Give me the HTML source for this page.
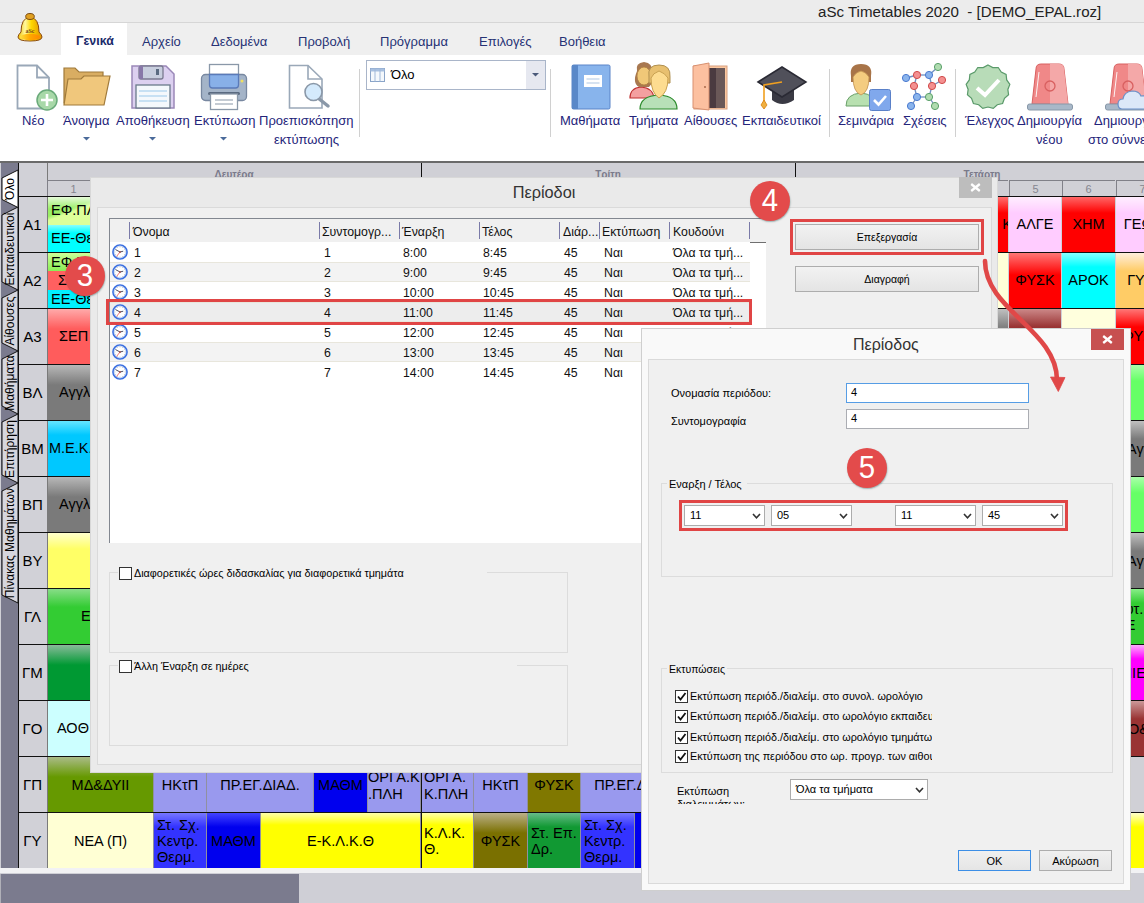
<!DOCTYPE html>
<html><head><meta charset="utf-8"><style>
html,body{margin:0;padding:0;}
body{width:1144px;height:903px;overflow:hidden;position:relative;font-family:"Liberation Sans", sans-serif;background:#fff;}
</style></head><body>
<div style="position:absolute;left:0px;top:161px;width:1144px;height:2px;background:#6a6a6a;"></div><div style="position:absolute;left:0px;top:163px;width:1144px;height:707px;background:#d0d0d6;"></div><div style="position:absolute;left:1px;top:163px;width:17px;height:707px;background:#7b7b8e;"></div><div style="position:absolute;left:18px;top:163px;width:29px;height:705px;background:#d1d1d7;border-left:1px solid #111;box-sizing:border-box;"></div><div style="position:absolute;left:47px;top:163px;width:1px;height:705px;background:#7a7a7a;"></div><div style="position:absolute;left:47px;top:163px;width:375px;height:17px;border-left:1px solid transparent;box-sizing:border-box;"></div><div style="position:absolute;left:47px;top:169px;white-space:nowrap;width:374px;text-align:center;font-size:10px;color:#7a7a8a;font-weight:bold;">Δευτέρα</div><div style="position:absolute;left:47px;top:180px;width:53px;height:16px;border-left:1px solid #808088;border-top:1px solid #808088;box-sizing:border-box;"></div><div style="position:absolute;left:47px;top:183px;white-space:nowrap;width:53px;text-align:center;font-size:11px;color:#85858f;">1</div><div style="position:absolute;left:100px;top:180px;width:53px;height:16px;border-left:1px solid #808088;border-top:1px solid #808088;box-sizing:border-box;"></div><div style="position:absolute;left:100px;top:183px;white-space:nowrap;width:53px;text-align:center;font-size:11px;color:#85858f;">2</div><div style="position:absolute;left:154px;top:180px;width:53px;height:16px;border-left:1px solid #808088;border-top:1px solid #808088;box-sizing:border-box;"></div><div style="position:absolute;left:154px;top:183px;white-space:nowrap;width:53px;text-align:center;font-size:11px;color:#85858f;">3</div><div style="position:absolute;left:207px;top:180px;width:53px;height:16px;border-left:1px solid #808088;border-top:1px solid #808088;box-sizing:border-box;"></div><div style="position:absolute;left:207px;top:183px;white-space:nowrap;width:53px;text-align:center;font-size:11px;color:#85858f;">4</div><div style="position:absolute;left:261px;top:180px;width:53px;height:16px;border-left:1px solid #808088;border-top:1px solid #808088;box-sizing:border-box;"></div><div style="position:absolute;left:261px;top:183px;white-space:nowrap;width:53px;text-align:center;font-size:11px;color:#85858f;">5</div><div style="position:absolute;left:314px;top:180px;width:53px;height:16px;border-left:1px solid #808088;border-top:1px solid #808088;box-sizing:border-box;"></div><div style="position:absolute;left:314px;top:183px;white-space:nowrap;width:53px;text-align:center;font-size:11px;color:#85858f;">6</div><div style="position:absolute;left:368px;top:180px;width:53px;height:16px;border-left:1px solid #808088;border-top:1px solid #808088;box-sizing:border-box;"></div><div style="position:absolute;left:368px;top:183px;white-space:nowrap;width:53px;text-align:center;font-size:11px;color:#85858f;">7</div><div style="position:absolute;left:421px;top:163px;width:375px;height:17px;border-left:1px solid #222;box-sizing:border-box;"></div><div style="position:absolute;left:421px;top:169px;white-space:nowrap;width:374px;text-align:center;font-size:10px;color:#7a7a8a;font-weight:bold;">Τρίτη</div><div style="position:absolute;left:421px;top:180px;width:53px;height:16px;border-left:1px solid #808088;border-top:1px solid #808088;box-sizing:border-box;"></div><div style="position:absolute;left:421px;top:183px;white-space:nowrap;width:53px;text-align:center;font-size:11px;color:#85858f;">1</div><div style="position:absolute;left:474px;top:180px;width:53px;height:16px;border-left:1px solid #808088;border-top:1px solid #808088;box-sizing:border-box;"></div><div style="position:absolute;left:474px;top:183px;white-space:nowrap;width:53px;text-align:center;font-size:11px;color:#85858f;">2</div><div style="position:absolute;left:528px;top:180px;width:53px;height:16px;border-left:1px solid #808088;border-top:1px solid #808088;box-sizing:border-box;"></div><div style="position:absolute;left:528px;top:183px;white-space:nowrap;width:53px;text-align:center;font-size:11px;color:#85858f;">3</div><div style="position:absolute;left:581px;top:180px;width:53px;height:16px;border-left:1px solid #808088;border-top:1px solid #808088;box-sizing:border-box;"></div><div style="position:absolute;left:581px;top:183px;white-space:nowrap;width:53px;text-align:center;font-size:11px;color:#85858f;">4</div><div style="position:absolute;left:635px;top:180px;width:53px;height:16px;border-left:1px solid #808088;border-top:1px solid #808088;box-sizing:border-box;"></div><div style="position:absolute;left:635px;top:183px;white-space:nowrap;width:53px;text-align:center;font-size:11px;color:#85858f;">5</div><div style="position:absolute;left:688px;top:180px;width:53px;height:16px;border-left:1px solid #808088;border-top:1px solid #808088;box-sizing:border-box;"></div><div style="position:absolute;left:688px;top:183px;white-space:nowrap;width:53px;text-align:center;font-size:11px;color:#85858f;">6</div><div style="position:absolute;left:742px;top:180px;width:53px;height:16px;border-left:1px solid #808088;border-top:1px solid #808088;box-sizing:border-box;"></div><div style="position:absolute;left:742px;top:183px;white-space:nowrap;width:53px;text-align:center;font-size:11px;color:#85858f;">7</div><div style="position:absolute;left:421px;top:163px;width:1px;height:33px;background:#222;"></div><div style="position:absolute;left:795px;top:163px;width:375px;height:17px;border-left:1px solid #222;box-sizing:border-box;"></div><div style="position:absolute;left:795px;top:169px;white-space:nowrap;width:374px;text-align:center;font-size:10px;color:#7a7a8a;font-weight:bold;">Τετάρτη</div><div style="position:absolute;left:795px;top:180px;width:53px;height:16px;border-left:1px solid #808088;border-top:1px solid #808088;box-sizing:border-box;"></div><div style="position:absolute;left:795px;top:183px;white-space:nowrap;width:53px;text-align:center;font-size:11px;color:#85858f;">1</div><div style="position:absolute;left:848px;top:180px;width:53px;height:16px;border-left:1px solid #808088;border-top:1px solid #808088;box-sizing:border-box;"></div><div style="position:absolute;left:848px;top:183px;white-space:nowrap;width:53px;text-align:center;font-size:11px;color:#85858f;">2</div><div style="position:absolute;left:902px;top:180px;width:53px;height:16px;border-left:1px solid #808088;border-top:1px solid #808088;box-sizing:border-box;"></div><div style="position:absolute;left:902px;top:183px;white-space:nowrap;width:53px;text-align:center;font-size:11px;color:#85858f;">3</div><div style="position:absolute;left:955px;top:180px;width:53px;height:16px;border-left:1px solid #808088;border-top:1px solid #808088;box-sizing:border-box;"></div><div style="position:absolute;left:955px;top:183px;white-space:nowrap;width:53px;text-align:center;font-size:11px;color:#85858f;">4</div><div style="position:absolute;left:1009px;top:180px;width:53px;height:16px;border-left:1px solid #808088;border-top:1px solid #808088;box-sizing:border-box;"></div><div style="position:absolute;left:1009px;top:183px;white-space:nowrap;width:53px;text-align:center;font-size:11px;color:#85858f;">5</div><div style="position:absolute;left:1062px;top:180px;width:53px;height:16px;border-left:1px solid #808088;border-top:1px solid #808088;box-sizing:border-box;"></div><div style="position:absolute;left:1062px;top:183px;white-space:nowrap;width:53px;text-align:center;font-size:11px;color:#85858f;">6</div><div style="position:absolute;left:1116px;top:180px;width:53px;height:16px;border-left:1px solid #808088;border-top:1px solid #808088;box-sizing:border-box;"></div><div style="position:absolute;left:1116px;top:183px;white-space:nowrap;width:53px;text-align:center;font-size:11px;color:#85858f;">7</div><div style="position:absolute;left:795px;top:163px;width:1px;height:33px;background:#222;"></div><div style="position:absolute;left:18px;top:196px;width:1126px;height:1px;background:#111;"></div><div style="position:absolute;left:18px;top:197px;white-space:nowrap;width:29px;height:55px;line-height:55px;text-align:center;font-size:15px;color:#000;">Α1</div><div style="position:absolute;left:18px;top:252px;width:1126px;height:1px;background:#111;"></div><div style="position:absolute;left:18px;top:253px;white-space:nowrap;width:29px;height:55px;line-height:55px;text-align:center;font-size:15px;color:#000;">Α2</div><div style="position:absolute;left:18px;top:308px;width:1126px;height:1px;background:#111;"></div><div style="position:absolute;left:18px;top:309px;white-space:nowrap;width:29px;height:55px;line-height:55px;text-align:center;font-size:15px;color:#000;">Α3</div><div style="position:absolute;left:18px;top:364px;width:1126px;height:1px;background:#111;"></div><div style="position:absolute;left:18px;top:365px;white-space:nowrap;width:29px;height:55px;line-height:55px;text-align:center;font-size:15px;color:#000;">ΒΛ</div><div style="position:absolute;left:18px;top:420px;width:1126px;height:1px;background:#111;"></div><div style="position:absolute;left:18px;top:421px;white-space:nowrap;width:29px;height:55px;line-height:55px;text-align:center;font-size:15px;color:#000;">ΒΜ</div><div style="position:absolute;left:18px;top:476px;width:1126px;height:1px;background:#111;"></div><div style="position:absolute;left:18px;top:477px;white-space:nowrap;width:29px;height:55px;line-height:55px;text-align:center;font-size:15px;color:#000;">ΒΠ</div><div style="position:absolute;left:18px;top:532px;width:1126px;height:1px;background:#111;"></div><div style="position:absolute;left:18px;top:533px;white-space:nowrap;width:29px;height:55px;line-height:55px;text-align:center;font-size:15px;color:#000;">ΒΥ</div><div style="position:absolute;left:18px;top:588px;width:1126px;height:1px;background:#111;"></div><div style="position:absolute;left:18px;top:589px;white-space:nowrap;width:29px;height:55px;line-height:55px;text-align:center;font-size:15px;color:#000;">ΓΛ</div><div style="position:absolute;left:18px;top:644px;width:1126px;height:1px;background:#111;"></div><div style="position:absolute;left:18px;top:645px;white-space:nowrap;width:29px;height:55px;line-height:55px;text-align:center;font-size:15px;color:#000;">ΓΜ</div><div style="position:absolute;left:18px;top:700px;width:1126px;height:1px;background:#111;"></div><div style="position:absolute;left:18px;top:701px;white-space:nowrap;width:29px;height:55px;line-height:55px;text-align:center;font-size:15px;color:#000;">ΓΟ</div><div style="position:absolute;left:18px;top:756px;width:1126px;height:1px;background:#111;"></div><div style="position:absolute;left:18px;top:757px;white-space:nowrap;width:29px;height:55px;line-height:55px;text-align:center;font-size:15px;color:#000;">ΓΠ</div><div style="position:absolute;left:18px;top:812px;width:1126px;height:1px;background:#111;"></div><div style="position:absolute;left:18px;top:813px;white-space:nowrap;width:29px;height:55px;line-height:55px;text-align:center;font-size:15px;color:#000;">ΓΥ</div><div style="position:absolute;left:18px;top:868px;width:1126px;height:1px;background:#111;"></div><div style="position:absolute;left:48px;top:197px;width:42px;height:28px;background:linear-gradient(to bottom,rgba(255,255,255,0.75) 0px,rgba(255,255,255,0) 12px),linear-gradient(160deg,#99ee66 0%,#99ee66 45%,#ddff99 55%,#ddff99 100%);overflow:hidden;"><div style="position:absolute;left:3px;top:5px;font-size:14.5px;white-space:nowrap;">ΕΦ.ΠΛΗ</div></div><div style="position:absolute;left:48px;top:225px;width:42px;height:27px;background:linear-gradient(to bottom,#88ffff 0,#00ffff 8px);overflow:hidden;"><div style="position:absolute;left:3px;top:5px;font-size:14.5px;white-space:nowrap;">ΕΕ-Θε</div></div><div style="position:absolute;left:48px;top:253px;width:42px;height:18px;background:linear-gradient(to bottom,#ccff99,#88ee55);overflow:hidden;"><div style="position:absolute;left:3px;top:1px;font-size:14.5px;white-space:nowrap;">ΕΦ.ΠΛ</div></div><div style="position:absolute;left:48px;top:271px;width:42px;height:19px;background:#ff6060;overflow:hidden;"><div style="position:absolute;left:10px;top:1px;font-size:14.5px;white-space:nowrap;">ΣΕΠ</div></div><div style="position:absolute;left:48px;top:290px;width:42px;height:18px;background:#00f0ff;overflow:hidden;"><div style="position:absolute;left:3px;top:1px;font-size:14.5px;white-space:nowrap;">ΕΕ-Θε</div></div><div style="position:absolute;left:48px;top:309px;width:42px;height:55px;background:linear-gradient(to bottom,#ffaaaa 0px,#ff5c5c 20px);overflow:hidden;"><div style="position:absolute;left:11px;top:0;line-height:55px;font-size:14.5px;white-space:nowrap;">ΣΕΠ</div></div><div style="position:absolute;left:48px;top:365px;width:42px;height:55px;background:linear-gradient(to bottom,#b8b8b8 0px,#7a7a7a 20px);overflow:hidden;"><div style="position:absolute;left:11px;top:0;line-height:55px;font-size:14.5px;white-space:nowrap;">Αγγλικά</div></div><div style="position:absolute;left:48px;top:421px;width:42px;height:55px;background:linear-gradient(to bottom,#66e6ff 0px,#00c8ff 14px);overflow:hidden;"><div style="position:absolute;left:1px;top:0;line-height:55px;font-size:14.5px;white-space:nowrap;">Μ.Ε.Κ.Α</div></div><div style="position:absolute;left:48px;top:477px;width:42px;height:55px;background:linear-gradient(to bottom,#b8b8b8 0px,#7a7a7a 20px);overflow:hidden;"><div style="position:absolute;left:11px;top:0;line-height:55px;font-size:14.5px;white-space:nowrap;">Αγγλικά</div></div><div style="position:absolute;left:48px;top:533px;width:42px;height:55px;background:linear-gradient(to bottom,#ffffcc 0px,#ffff66 16px);overflow:hidden;"></div><div style="position:absolute;left:48px;top:589px;width:42px;height:55px;background:linear-gradient(to bottom,#88dd88 0px,#33cc33 18px);overflow:hidden;"><div style="position:absolute;left:33px;top:0;line-height:55px;font-size:14.5px;white-space:nowrap;">Ε</div></div><div style="position:absolute;left:48px;top:645px;width:42px;height:55px;background:linear-gradient(to bottom,#88bb99 0px,#009933 20px);overflow:hidden;"></div><div style="position:absolute;left:48px;top:701px;width:42px;height:55px;background:#ccffff;overflow:hidden;"><div style="position:absolute;left:9px;top:0;line-height:55px;font-size:14.5px;white-space:nowrap;">ΑΟΘ</div></div><div style="position:absolute;left:955px;top:197px;width:53px;height:55px;background:linear-gradient(to bottom,#ff7070 0px,#ff0000 16px);overflow:hidden;"><div style="position:absolute;right:-4px;top:0;line-height:55px;font-size:14.5px;white-space:nowrap;">K</div></div><div style="position:absolute;left:1009px;top:197px;width:52px;height:55px;background:linear-gradient(to bottom,#ffeeff 0px,#ffccff 16px);overflow:hidden;"><div style="position:absolute;left:0;right:0;top:0;line-height:55px;text-align:center;font-size:14.5px;white-space:nowrap;">ΑΛΓΕ</div></div><div style="position:absolute;left:1062px;top:197px;width:53px;height:55px;background:linear-gradient(to bottom,#ff6666 0px,#ff0000 16px);overflow:hidden;"><div style="position:absolute;left:0;right:0;top:0;line-height:55px;text-align:center;font-size:14.5px;white-space:nowrap;">ΧΗΜ</div></div><div style="position:absolute;left:1116px;top:197px;width:52px;height:55px;background:linear-gradient(to bottom,#ffeeff 0px,#ffccff 16px);overflow:hidden;"><div style="position:absolute;left:0;right:0;top:0;line-height:55px;text-align:center;font-size:14.5px;white-space:nowrap;">ΓΕΩΓ</div></div><div style="position:absolute;left:955px;top:253px;width:53px;height:55px;background:#ffffd8;overflow:hidden;"></div><div style="position:absolute;left:1009px;top:253px;width:52px;height:55px;background:linear-gradient(to bottom,#ff7777 0px,#ff0000 22px);overflow:hidden;"><div style="position:absolute;left:0;right:0;top:0;line-height:55px;text-align:center;font-size:14.5px;white-space:nowrap;">ΦΥΣΚ</div></div><div style="position:absolute;left:1062px;top:253px;width:53px;height:55px;background:linear-gradient(to bottom,#88ffff 0px,#00ffff 14px);overflow:hidden;"><div style="position:absolute;left:0;right:0;top:0;line-height:55px;text-align:center;font-size:14.5px;white-space:nowrap;">ΑΡΟΚ</div></div><div style="position:absolute;left:1116px;top:253px;width:52px;height:55px;background:linear-gradient(to bottom,#ffeedd 0px,#ffcc66 18px);overflow:hidden;"><div style="position:absolute;left:0;right:0;top:0;line-height:55px;text-align:center;font-size:14.5px;white-space:nowrap;">ΓΥΜ</div></div><div style="position:absolute;left:955px;top:309px;width:53px;height:55px;background:linear-gradient(to bottom,#c0c0c0 0px,#808080 18px);overflow:hidden;"></div><div style="position:absolute;left:1009px;top:309px;width:52px;height:55px;background:linear-gradient(to bottom,#cc8888 0px,#993333 18px);overflow:hidden;"></div><div style="position:absolute;left:1062px;top:309px;width:53px;height:55px;background:#ffffdd;overflow:hidden;"></div><div style="position:absolute;left:1116px;top:309px;width:52px;height:55px;background:linear-gradient(to bottom,#ff7777 0px,#ff0000 18px);overflow:hidden;"><div style="position:absolute;left:0;right:0;top:0;line-height:55px;text-align:center;font-size:14.5px;white-space:nowrap;">ΦΥΣΚ</div></div><div style="position:absolute;left:1116px;top:365px;width:60px;height:55px;background:linear-gradient(to bottom,#aaffaa 0px,#66ff66 16px);overflow:hidden;"></div><div style="position:absolute;left:1116px;top:421px;width:60px;height:55px;background:linear-gradient(to bottom,#c0c0c0 0px,#7a7a7a 18px);overflow:hidden;"><div style="position:absolute;left:0;top:0;height:55px;display:flex;align-items:center;font-size:14.5px;line-height:16px;white-space:nowrap;"><span style="padding-left:11px">Αγγλ</span></div></div><div style="position:absolute;left:1116px;top:477px;width:60px;height:55px;background:linear-gradient(to bottom,#aaffaa 0px,#66ff66 16px);overflow:hidden;"></div><div style="position:absolute;left:1116px;top:533px;width:60px;height:55px;background:linear-gradient(to bottom,#c0c0c0 0px,#7a7a7a 18px);overflow:hidden;"><div style="position:absolute;left:0;top:0;height:55px;display:flex;align-items:center;font-size:14.5px;line-height:16px;white-space:nowrap;"><span style="padding-left:11px">Αγγλ</span></div></div><div style="position:absolute;left:1116px;top:589px;width:60px;height:55px;background:linear-gradient(to bottom,#88ee88 0px,#33cc33 14px);overflow:hidden;"><div style="position:absolute;left:0;top:0;height:55px;display:flex;align-items:center;font-size:14.5px;line-height:16px;white-space:nowrap;">Αυτ.<br>ΕΕ</div></div><div style="position:absolute;left:1116px;top:645px;width:60px;height:55px;background:linear-gradient(to bottom,#ffaaff 0px,#ff00ff 14px);overflow:hidden;"><div style="position:absolute;left:0;top:0;height:55px;display:flex;align-items:center;font-size:14.5px;line-height:16px;white-space:nowrap;">&nbsp;ΜΙΕ</div></div><div style="position:absolute;left:1116px;top:701px;width:60px;height:55px;background:linear-gradient(to bottom,#cc9999 0px,#993333 18px);overflow:hidden;"><div style="position:absolute;left:0;top:0;height:55px;display:flex;align-items:center;font-size:14.5px;line-height:16px;white-space:nowrap;">ΜΟ&</div></div><div style="position:absolute;left:1116px;top:757px;width:60px;height:55px;background:#d0d0d6;overflow:hidden;"></div><div style="position:absolute;left:1116px;top:813px;width:60px;height:55px;background:linear-gradient(to bottom,#ffffcc 0px,#ffff00 14px);overflow:hidden;"></div><div style="position:absolute;left:48px;top:757px;width:106px;height:55px;background:linear-gradient(to bottom,#aabb88 0px,#669900 20px);overflow:hidden;box-sizing:border-box;border-right:1px solid #9090a0;"><div style="position:absolute;left:0;right:0;top:50%;transform:translateY(-50%);text-align:center;font-size:14.5px;white-space:nowrap;">ΜΔ&amp;ΔΥΙΙ</div></div><div style="position:absolute;left:154px;top:757px;width:53px;height:55px;background:#9999ee;overflow:hidden;box-sizing:border-box;border-right:1px solid #9090a0;"><div style="position:absolute;left:0;right:0;top:50%;transform:translateY(-50%);text-align:center;font-size:14.5px;white-space:nowrap;">ΗΚτΠ</div></div><div style="position:absolute;left:207px;top:757px;width:107px;height:55px;background:#9999ee;overflow:hidden;box-sizing:border-box;border-right:1px solid #9090a0;"><div style="position:absolute;left:0;right:0;top:50%;transform:translateY(-50%);text-align:center;font-size:14.5px;white-space:nowrap;">ΠΡ.ΕΓ.ΔΙΑΔ.</div></div><div style="position:absolute;left:314px;top:757px;width:54px;height:55px;background:#0000ee;overflow:hidden;box-sizing:border-box;border-right:1px solid #9090a0;"><div style="position:absolute;left:0;right:0;top:50%;transform:translateY(-50%);text-align:center;font-size:14.5px;white-space:nowrap;">ΜΑΘΜ</div></div><div style="position:absolute;left:368px;top:757px;width:53px;height:55px;background:#9999ee;overflow:hidden;box-sizing:border-box;border-right:1px solid #9090a0;"></div><div style="position:absolute;left:368px;top:757px;width:53px;height:55px;overflow:hidden;"><div style="position:absolute;left:0;top:12px;line-height:17px;font-size:14.5px;white-space:nowrap;">ΟΡΙ Α.Κ<br>.ΠΛΗ</div></div><div style="position:absolute;left:421px;top:757px;width:53px;height:55px;background:#9999ee;overflow:hidden;box-sizing:border-box;border-right:1px solid #9090a0;"></div><div style="position:absolute;left:421px;top:757px;width:53px;height:55px;overflow:hidden;"><div style="position:absolute;left:3px;top:12px;line-height:17px;font-size:14.5px;white-space:nowrap;">ΟΡΙ Α.<br>Κ.ΠΛΗ</div></div><div style="position:absolute;left:474px;top:757px;width:54px;height:55px;background:#9999ee;overflow:hidden;box-sizing:border-box;border-right:1px solid #9090a0;"><div style="position:absolute;left:0;right:0;top:50%;transform:translateY(-50%);text-align:center;font-size:14.5px;white-space:nowrap;">ΗΚτΠ</div></div><div style="position:absolute;left:528px;top:757px;width:53px;height:55px;background:#807800;overflow:hidden;box-sizing:border-box;border-right:1px solid #9090a0;"><div style="position:absolute;left:0;right:0;top:50%;transform:translateY(-50%);text-align:center;font-size:14.5px;white-space:nowrap;">ΦΥΣΚ</div></div><div style="position:absolute;left:581px;top:757px;width:107px;height:55px;background:#9999ee;overflow:hidden;box-sizing:border-box;border-right:1px solid #9090a0;"><div style="position:absolute;left:0;right:0;top:50%;transform:translateY(-50%);text-align:center;font-size:14.5px;white-space:nowrap;">ΠΡ.ΕΓ.ΔΙΑΔ.</div></div><div style="position:absolute;left:48px;top:813px;width:106px;height:55px;background:#ffffd4;overflow:hidden;box-sizing:border-box;border-right:1px solid #9090a0;"><div style="position:absolute;left:0;right:0;top:50%;transform:translateY(-50%);text-align:center;font-size:14.5px;white-space:nowrap;">ΝΕΑ (Π)</div></div><div style="position:absolute;left:154px;top:813px;width:53px;height:55px;background:linear-gradient(to bottom,#7777ff 0px,#3333ff 14px);overflow:hidden;box-sizing:border-box;border-right:1px solid #9090a0;"><div style="position:absolute;left:0;right:0;top:50%;transform:translateY(-50%);text-align:center;font-size:14.5px;white-space:nowrap;"><div style="line-height:16px;text-align:left;padding-left:3px">Στ. Σχ.<br>Κεντρ.<br>Θερμ.</div></div></div><div style="position:absolute;left:207px;top:813px;width:54px;height:55px;background:linear-gradient(to bottom,#4444ff 0px,#0000ee 14px);overflow:hidden;box-sizing:border-box;border-right:1px solid #9090a0;"><div style="position:absolute;left:0;right:0;top:50%;transform:translateY(-50%);text-align:center;font-size:14.5px;white-space:nowrap;">ΜΑΘΜ</div></div><div style="position:absolute;left:261px;top:813px;width:160px;height:55px;background:linear-gradient(to bottom,#ffffaa 0px,#ffff00 12px);overflow:hidden;box-sizing:border-box;border-right:1px solid #9090a0;"><div style="position:absolute;left:0;right:0;top:50%;transform:translateY(-50%);text-align:center;font-size:14.5px;white-space:nowrap;">Ε-Κ.Λ.Κ.Θ</div></div><div style="position:absolute;left:421px;top:813px;width:53px;height:55px;background:linear-gradient(to bottom,#ffffaa 0px,#ffff00 12px);overflow:hidden;box-sizing:border-box;border-right:1px solid #9090a0;"><div style="position:absolute;left:0;right:0;top:50%;transform:translateY(-50%);text-align:center;font-size:14.5px;white-space:nowrap;"><div style="line-height:16px;text-align:left;padding-left:3px">Κ.Λ.Κ.<br>Θ.</div></div></div><div style="position:absolute;left:474px;top:813px;width:54px;height:55px;background:linear-gradient(to bottom,#bbb088 0px,#7a7000 20px);overflow:hidden;box-sizing:border-box;border-right:1px solid #9090a0;"><div style="position:absolute;left:0;right:0;top:50%;transform:translateY(-50%);text-align:center;font-size:14.5px;white-space:nowrap;">ΦΥΣΚ</div></div><div style="position:absolute;left:528px;top:813px;width:53px;height:55px;background:linear-gradient(to bottom,#66bb88 0px,#119933 14px);overflow:hidden;box-sizing:border-box;border-right:1px solid #9090a0;"><div style="position:absolute;left:0;right:0;top:50%;transform:translateY(-50%);text-align:center;font-size:14.5px;white-space:nowrap;"><div style="line-height:16px;text-align:left;padding-left:3px">Στ. Επ.<br>Δρ.</div></div></div><div style="position:absolute;left:581px;top:813px;width:54px;height:55px;background:linear-gradient(to bottom,#7777ff 0px,#3333ff 14px);overflow:hidden;box-sizing:border-box;border-right:1px solid #9090a0;"><div style="position:absolute;left:0;right:0;top:50%;transform:translateY(-50%);text-align:center;font-size:14.5px;white-space:nowrap;"><div style="line-height:16px;text-align:left;padding-left:3px">Στ. Σχ.<br>Κεντρ.<br>Θερμ.</div></div></div><div style="position:absolute;left:635px;top:813px;width:53px;height:55px;background:#0000ee;overflow:hidden;box-sizing:border-box;border-right:1px solid #9090a0;"></div><div style="position:absolute;left:421px;top:163px;width:1px;height:705px;background:#111;"></div><div style="position:absolute;left:795px;top:163px;width:1px;height:705px;background:#111;"></div><svg style="position:absolute;left:0;top:0" width="20" height="620" viewBox="0 0 20 620"><polygon points="18,207 2,215 2,282 18,290" fill="#d6d6de" stroke="#111" stroke-width="1"/><polygon points="18,290 2,298 2,343 18,351" fill="#d6d6de" stroke="#111" stroke-width="1"/><polygon points="18,351 2,359 2,406 18,414" fill="#d6d6de" stroke="#111" stroke-width="1"/><polygon points="18,414 2,422 2,475 18,483" fill="#d6d6de" stroke="#111" stroke-width="1"/><polygon points="18,483 2,491 2,595 18,603" fill="#d6d6de" stroke="#111" stroke-width="1"/><polygon points="18,170 2,178 2,199.5 18,207.5" fill="#fff" stroke="#111" stroke-width="1"/></svg><div style="position:absolute;left:-50px;top:180.5px;width:120px;height:16px;line-height:16px;text-align:center;transform:rotate(-90deg);font-size:12px;color:#000;white-space:nowrap;">Όλο</div><div style="position:absolute;left:-50px;top:240.5px;width:120px;height:16px;line-height:16px;text-align:center;transform:rotate(-90deg);font-size:12px;color:#000;white-space:nowrap;">Εκπαιδευτικοί</div><div style="position:absolute;left:-50px;top:312.5px;width:120px;height:16px;line-height:16px;text-align:center;transform:rotate(-90deg);font-size:12px;color:#000;white-space:nowrap;">Αίθουσες</div><div style="position:absolute;left:-50px;top:374.5px;width:120px;height:16px;line-height:16px;text-align:center;transform:rotate(-90deg);font-size:12px;color:#000;white-space:nowrap;">Μαθήματα</div><div style="position:absolute;left:-50px;top:440.5px;width:120px;height:16px;line-height:16px;text-align:center;transform:rotate(-90deg);font-size:12px;color:#000;white-space:nowrap;">Επιτήρηση</div><div style="position:absolute;left:-50px;top:535.0px;width:120px;height:16px;line-height:16px;text-align:center;transform:rotate(-90deg);font-size:12px;color:#000;white-space:nowrap;">Πίνακας Μαθημάτων</div><div style="position:absolute;left:0px;top:868px;width:1144px;height:6px;background:#f2f2f4;border-bottom:1px solid #909098;box-sizing:border-box;"></div><div style="position:absolute;left:0px;top:873px;width:1144px;height:30px;background:#cfcfd6;"></div><div style="position:absolute;left:0px;top:874px;width:1px;height:29px;background:#b0b0b8;"></div><div style="position:absolute;left:1px;top:874px;width:298px;height:29px;background:#7b7b8e;"></div><div style="position:absolute;left:0px;top:0px;width:1144px;height:23px;background:#ececec;border-bottom:1px solid #d6d6d6;box-sizing:border-box;"></div><div style="position:absolute;left:818px;top:3px;white-space:nowrap;font-size:15.1px;color:#222;">aSc Timetables 2020&nbsp; - [DEMO_EPAL.roz]</div><div style="position:absolute;left:0px;top:23px;width:1144px;height:32px;background:#efefef;"></div><div style="position:absolute;left:61px;top:23px;width:66px;height:32px;background:#fff;"></div><div style="position:absolute;left:76px;top:34px;white-space:nowrap;font-size:12.4px;color:#1a2a6a;font-weight:bold;">Γενικά</div><div style="position:absolute;left:142px;top:34px;white-space:nowrap;font-size:13px;color:#263275;">Αρχείο</div><div style="position:absolute;left:211px;top:34px;white-space:nowrap;font-size:13px;color:#263275;">Δεδομένα</div><div style="position:absolute;left:298px;top:34px;white-space:nowrap;font-size:13px;color:#263275;">Προβολή</div><div style="position:absolute;left:380px;top:34px;white-space:nowrap;font-size:13px;color:#263275;">Πρόγραμμα</div><div style="position:absolute;left:479px;top:34px;white-space:nowrap;font-size:13px;color:#263275;">Επιλογές</div><div style="position:absolute;left:559px;top:34px;white-space:nowrap;font-size:13px;color:#263275;">Βοήθεια</div><div style="position:absolute;left:0px;top:55px;width:1144px;height:106px;background:#fff;"></div><div style="position:absolute;left:22px;top:113px;white-space:nowrap;font-size:13px;color:#24247a;">Νέο</div><div style="position:absolute;left:63px;top:113px;white-space:nowrap;font-size:13px;color:#24247a;">Άνοιγμα</div><div style="position:absolute;left:116px;top:113px;white-space:nowrap;font-size:13px;color:#24247a;">Αποθήκευση</div><div style="position:absolute;left:194px;top:113px;white-space:nowrap;font-size:13px;color:#24247a;">Εκτύπωση</div><div style="position:absolute;left:259px;top:113px;white-space:nowrap;font-size:13px;color:#24247a;">Προεπισκόπηση</div><div style="position:absolute;left:274px;top:132px;white-space:nowrap;font-size:13px;color:#24247a;">εκτύπωσης</div><div style="position:absolute;left:560px;top:113px;white-space:nowrap;font-size:13px;color:#24247a;">Μαθήματα</div><div style="position:absolute;left:629px;top:113px;white-space:nowrap;font-size:13px;color:#24247a;">Τμήματα</div><div style="position:absolute;left:684px;top:113px;white-space:nowrap;font-size:13px;color:#24247a;">Αίθουσες</div><div style="position:absolute;left:742px;top:113px;white-space:nowrap;font-size:13px;color:#24247a;">Εκπαιδευτικοί</div><div style="position:absolute;left:838px;top:113px;white-space:nowrap;font-size:13px;color:#24247a;">Σεμινάρια</div><div style="position:absolute;left:903px;top:113px;white-space:nowrap;font-size:13px;color:#24247a;">Σχέσεις</div><div style="position:absolute;left:965px;top:113px;white-space:nowrap;font-size:13px;color:#24247a;">Έλεγχος</div><div style="position:absolute;left:1017px;top:113px;white-space:nowrap;font-size:13px;color:#24247a;">Δημιουργία</div><div style="position:absolute;left:1036px;top:132px;white-space:nowrap;font-size:13px;color:#24247a;">νέου</div><div style="position:absolute;left:1094px;top:113px;white-space:nowrap;font-size:13px;color:#24247a;">Δημιουργία</div><div style="position:absolute;left:1088px;top:132px;white-space:nowrap;font-size:13px;color:#24247a;">στο σύννεφο</div><svg style="position:absolute;left:83px;top:137px" width="7" height="4" viewBox="0 0 7 4"><path d="M0 0 L7 0 L3.5 3.5 Z" fill="#4a6a9a"/></svg><svg style="position:absolute;left:149px;top:137px" width="7" height="4" viewBox="0 0 7 4"><path d="M0 0 L7 0 L3.5 3.5 Z" fill="#4a6a9a"/></svg><svg style="position:absolute;left:220px;top:137px" width="7" height="4" viewBox="0 0 7 4"><path d="M0 0 L7 0 L3.5 3.5 Z" fill="#4a6a9a"/></svg><div style="position:absolute;left:359px;top:69px;width:1px;height:68px;background:#d0d0d0;"></div><div style="position:absolute;left:550px;top:69px;width:1px;height:68px;background:#d0d0d0;"></div><div style="position:absolute;left:829px;top:69px;width:1px;height:68px;background:#d0d0d0;"></div><div style="position:absolute;left:955px;top:69px;width:1px;height:68px;background:#d0d0d0;"></div><div style="position:absolute;left:366px;top:60px;width:180px;height:30px;background:#fff;border:1px solid #a9b5c9;box-sizing:border-box;"></div><div style="position:absolute;left:526px;top:61px;width:19px;height:28px;background:#e6e8f0;"></div><svg style="position:absolute;left:532px;top:73px" width="7" height="4" viewBox="0 0 7 4"><path d="M0 0 L7 0 L3.5 3.5 Z" fill="#4a5a7a"/></svg><svg style="position:absolute;left:370px;top:68px" width="15" height="14" viewBox="0 0 15 14"><rect x="0.5" y="0.5" width="14" height="13" fill="#f4f8fc" stroke="#8aa4c8"/><rect x="0.5" y="0.5" width="14" height="3" fill="#a8c0e0"/><path d="M5 0.5 V13.5 M10 0.5 V13.5" stroke="#a0b8d8"/></svg><div style="position:absolute;left:391px;top:67px;white-space:nowrap;font-size:13px;color:#000;">Όλο</div><svg style="position:absolute;left:15px;top:63px" width="44" height="50" viewBox="0 0 44 50"><path d="M2.5 2.5 H22 L34 14.5 V45.5 H2.5 Z" fill="#fff" stroke="#9aa8b8" stroke-width="1.8"/><path d="M22 2.5 V14.5 H34" fill="none" stroke="#9aa8b8" stroke-width="1.8"/><circle cx="32" cy="37" r="10" fill="#a8d8a8" stroke="#6aaa7a" stroke-width="1.5"/><path d="M32 31 V43 M26 37 H38" stroke="#fff" stroke-width="2.6"/></svg><svg style="position:absolute;left:62px;top:65px" width="50" height="44" viewBox="0 0 50 44"><path d="M2 3 H13 L17 7 H41 V38 H2 Z" fill="#d9ad62" stroke="#a07a3a" stroke-width="1.2"/><path d="M6 14 H19 L22 11 H48 L42 40 H2 Z" fill="#f0c77c" stroke="#a07a3a" stroke-width="1.2"/></svg><svg style="position:absolute;left:130px;top:64px" width="46" height="46" viewBox="0 0 46 46"><path d="M2 2 H36 L44 10 V44 H2 Z" fill="#dcd0f0" stroke="#9a88b8" stroke-width="1.5"/><rect x="9" y="2" width="24" height="13" rx="2" fill="#c8cede" stroke="#7a7a90" stroke-width="1.3"/><rect x="9" y="2" width="4" height="13" fill="#8878a8"/><rect x="26" y="5" width="3" height="6" fill="#5a6a80"/><rect x="6" y="21" width="34" height="23" fill="#f4f8fc" stroke="#6a7a8a" stroke-width="1.3"/><path d="M9 27 H37 M9 32 H37 M9 37 H37" stroke="#b8d8f0" stroke-width="1.3"/></svg><svg style="position:absolute;left:200px;top:63px" width="48" height="48" viewBox="0 0 48 48"><rect x="9.5" y="1.5" width="29" height="14" fill="#fff" stroke="#8a98a8" stroke-width="1.3"/><rect x="1.5" y="11.5" width="45" height="26" rx="4" fill="#a4b4c8" stroke="#7888a0" stroke-width="1.3"/><path d="M9.5 11.5 H38.5 V22 Q38.5 25 35.5 25 H12.5 Q9.5 25 9.5 22 Z" fill="#88b0e8" stroke="#5a7ab8" stroke-width="1.3"/><circle cx="42" cy="18" r="1.5" fill="#f0e060"/><rect x="8" y="29" width="32" height="3" rx="1.5" fill="#5a6a80"/><rect x="10.5" y="31" width="27" height="15.5" fill="#fff" stroke="#8a98a8" stroke-width="1.3"/><path d="M15 37 H33 M15 41 H33" stroke="#8a98a8" stroke-width="1.2"/></svg><svg style="position:absolute;left:287px;top:63px" width="46" height="48" viewBox="0 0 46 48"><path d="M2.5 2.5 H21 L35 16 V45 H2.5 Z" fill="#fff" stroke="#9aa8b8" stroke-width="1.6"/><path d="M21 2.5 V16 H35" fill="none" stroke="#9aa8b8" stroke-width="1.6"/><path d="M31 35 L41 43" stroke="#8a98a8" stroke-width="3.5" stroke-linecap="round"/><circle cx="26.5" cy="29" r="8.5" fill="#d4eafc" stroke="#8a98a8" stroke-width="1.6"/></svg><svg style="position:absolute;left:571px;top:64px" width="41" height="46" viewBox="0 0 41 46"><rect x="1" y="1" width="38" height="44" rx="1.5" fill="#88b4ec" stroke="#5a84c8" stroke-width="1"/><rect x="1" y="1" width="6" height="44" fill="#5a88c8"/><rect x="13" y="11" width="18" height="12" fill="#fff"/><path d="M15.5 15 H28.5 M15.5 19 H28.5" stroke="#b0c8e4" stroke-width="1.2"/></svg><svg style="position:absolute;left:627px;top:61px" width="54" height="52" viewBox="0 0 54 52"><path d="M3 37 Q3 27 14 26 Q26 27 27 37 Z" fill="#f4a0a0" stroke="#c03030" stroke-width="1.2"/><path d="M10 10 Q8 2 17 1 Q26 2 26 12 Q28 20 22 26 L12 26 Q5 22 10 10 Z" fill="#a87850"/><ellipse cx="17" cy="15" rx="7" ry="9" fill="#f0c878" stroke="#b08040" stroke-width="0.8"/><path d="M13 48 Q13 35 32 34 Q50 35 50 48 Z" fill="#b8e0b8" stroke="#2a8a2a" stroke-width="1.2"/><path d="M22 16 Q20 4 32 4 Q44 4 43 16 L43 22 L22 22 Z" fill="#e8c070" stroke="#b09050" stroke-width="1"/><path d="M24 17 Q24 32 32 37 Q41 32 41 17 Q38 12 32 10 Q26 12 24 17 Z" fill="#fddc90" stroke="#c8a050" stroke-width="1"/></svg><svg style="position:absolute;left:691px;top:62px" width="38" height="50" viewBox="0 0 38 50"><rect x="3" y="4" width="33" height="43" fill="#fcc8a0" stroke="#d8a080" stroke-width="1"/><rect x="18" y="6" width="16" height="40" fill="#4a3a40"/><rect x="25" y="6" width="9" height="40" fill="#6a5858"/><path d="M2 4 L18 1 V48 L2 46 Z" fill="#fcc0a0" stroke="#d89070" stroke-width="1"/><circle cx="14" cy="25" r="0.9" fill="#a06040"/></svg><svg style="position:absolute;left:756px;top:64px" width="52" height="46" viewBox="0 0 52 46"><path d="M16 16 V36 Q26 44 38 36 V16 Z" fill="#3a3a44"/><path d="M2 18 L26 3 L50 18 L26 33 Z" fill="#50505a" stroke="#2a2a34" stroke-width="1.5"/><path d="M26 18 L8 21 V38" stroke="#f0a020" stroke-width="1.6" fill="none"/><path d="M8 36 L5 41 L8 45 L11 41 Z" fill="#f0b040" stroke="#d88010" stroke-width="0.8"/></svg><svg style="position:absolute;left:843px;top:62px" width="50" height="50" viewBox="0 0 50 50"><path d="M3 44 Q3 32 18 31 Q32 32 33 44 Z" fill="#b8e0b0" stroke="#6aa06a" stroke-width="1"/><path d="M8 14 Q6 2 18 2 Q30 2 28 14 L28 20 L8 20 Z" fill="#a87448"/><path d="M10 15 Q10 30 18 33 Q26 30 26 15 Q23 10 18 9 Q13 10 10 15 Z" fill="#f4cc80" stroke="#c09050" stroke-width="0.8"/><rect x="26.5" y="27.5" width="21" height="21" rx="2" fill="#80a8ec" stroke="#5a80c8" stroke-width="1"/><path d="M31 38 L35.5 42.5 L43 34" stroke="#fff" stroke-width="2.6" fill="none"/></svg><svg style="position:absolute;left:900px;top:60px" width="50" height="52" viewBox="0 0 50 52"><line x1="6" y1="18" x2="17" y2="15" stroke="#7090c0" stroke-width="1.3"/><line x1="17" y1="15" x2="29" y2="15" stroke="#7090c0" stroke-width="1.3"/><line x1="29" y1="15" x2="38" y2="7" stroke="#7090c0" stroke-width="1.3"/><line x1="17" y1="15" x2="14" y2="26" stroke="#7090c0" stroke-width="1.3"/><line x1="29" y1="15" x2="32" y2="26" stroke="#7090c0" stroke-width="1.3"/><line x1="32" y1="26" x2="42" y2="20" stroke="#7090c0" stroke-width="1.3"/><line x1="14" y1="26" x2="17" y2="37" stroke="#7090c0" stroke-width="1.3"/><line x1="17" y1="37" x2="29" y2="37" stroke="#7090c0" stroke-width="1.3"/><line x1="32" y1="26" x2="29" y2="37" stroke="#7090c0" stroke-width="1.3"/><line x1="17" y1="37" x2="11" y2="46" stroke="#7090c0" stroke-width="1.3"/><line x1="29" y1="37" x2="35" y2="46" stroke="#7090c0" stroke-width="1.3"/><circle cx="6" cy="18" r="3.6" fill="#8ab4ec" stroke="#4a7ad0" stroke-width="1"/><circle cx="17" cy="15" r="3.6" fill="#f49090" stroke="#d04a4a" stroke-width="1"/><circle cx="29" cy="15" r="3.6" fill="#8ab4ec" stroke="#4a7ad0" stroke-width="1"/><circle cx="38" cy="7" r="3.6" fill="#b0dcb0" stroke="#5aa06a" stroke-width="1"/><circle cx="14" cy="26" r="3.6" fill="#f49090" stroke="#d04a4a" stroke-width="1"/><circle cx="32" cy="26" r="3.6" fill="#f49090" stroke="#d04a4a" stroke-width="1"/><circle cx="42" cy="20" r="3.6" fill="#f49090" stroke="#d04a4a" stroke-width="1"/><circle cx="17" cy="37" r="3.6" fill="#8ab4ec" stroke="#4a7ad0" stroke-width="1"/><circle cx="29" cy="37" r="3.6" fill="#b0dcb0" stroke="#5aa06a" stroke-width="1"/><circle cx="11" cy="46" r="3.6" fill="#8ab4ec" stroke="#4a7ad0" stroke-width="1"/><circle cx="35" cy="46" r="3.6" fill="#b0dcb0" stroke="#5aa06a" stroke-width="1"/></svg><svg style="position:absolute;left:965px;top:64px" width="46" height="46" viewBox="0 0 46 46"><polygon points="23.00,1.00 27.79,3.58 33.22,3.52 36.26,8.03 41.11,10.50 41.70,15.91 44.84,20.35 42.85,25.41 43.57,30.80 39.46,34.36 37.59,39.47 32.29,40.71 28.26,44.36 23.00,43.00 17.74,44.36 13.71,40.71 8.41,39.47 6.54,34.36 2.43,30.80 3.15,25.41 1.16,20.35 4.30,15.91 4.89,10.50 9.74,8.03 12.78,3.52 18.21,3.58" fill="#b8dcb8" stroke="#5a9a6a" stroke-width="1.2"/><path d="M12 24 L20 31 L34 16" stroke="#fff" stroke-width="4" fill="none"/></svg><svg style="position:absolute;left:1026px;top:63px" width="50" height="49" viewBox="0 0 50 49"><path d="M10 6 Q10 1 15 1 H33 Q38 1 38 6 L42 41 H6 Z" fill="#f08888" stroke="#d86060" stroke-width="1"/><path d="M24 1 H33 Q38 1 38 6 L42 41 H24 Z" fill="#f4a8a8"/><path d="M13 9 L10 34" stroke="#fff" stroke-width="1" opacity="0.9"/><circle cx="24" cy="23" r="5" fill="none" stroke="#d86060" stroke-width="1.3"/><rect x="1.5" y="41" width="45" height="6" rx="2" fill="#a8b8c8" stroke="#8898a8" stroke-width="1"/></svg><svg style="position:absolute;left:1104px;top:63px" width="50" height="49" viewBox="0 0 50 49"><path d="M10 6 Q10 1 15 1 H33 Q38 1 38 6 L42 41 H6 Z" fill="#f08888" stroke="#d86060" stroke-width="1"/><path d="M24 1 H33 Q38 1 38 6 L42 41 H24 Z" fill="#f4a8a8"/><path d="M13 9 L10 34" stroke="#fff" stroke-width="1" opacity="0.9"/><circle cx="24" cy="23" r="5" fill="none" stroke="#d86060" stroke-width="1.3"/><rect x="1.5" y="41" width="45" height="6" rx="2" fill="#a8b8c8" stroke="#8898a8" stroke-width="1"/><path d="M18 46 Q14 46 14 41 Q14 36 19 36 Q20 29 28 28 Q35 28 37 33 Q44 32 46 38 L48 46 Z" fill="#dce8f8" stroke="#6a90c8" stroke-width="1.2"/></svg><svg style="position:absolute;left:14px;top:10px" width="32" height="34" viewBox="0 0 32 34"><defs><linearGradient id="bg1" x1="0" x2="1" y1="0" y2="0"><stop offset="0" stop-color="#f0c000"/><stop offset="0.3" stop-color="#fff8a0"/><stop offset="0.55" stop-color="#ffd800"/><stop offset="1" stop-color="#e09000"/></linearGradient><linearGradient id="bg2" x1="0" x2="1"><stop offset="0" stop-color="#ffe040"/><stop offset="0.5" stop-color="#ffa800"/><stop offset="1" stop-color="#ff8800"/></linearGradient></defs><path d="M7 22 Q7 8 16 7 Q25 8 25 22 Q28 25 28 27 Q28 31 16 31 Q4 31 4 27 Q4 25 7 22 Z" fill="url(#bg1)" stroke="#8a4a10" stroke-width="1"/><ellipse cx="16" cy="27" rx="10" ry="3.2" fill="url(#bg2)"/><ellipse cx="16" cy="6.5" rx="4.3" ry="3" fill="#e0a020" stroke="#7a4a10" stroke-width="1"/><text x="16" y="23" font-size="6" font-family="Liberation Serif" text-anchor="middle" fill="#7a4a20" font-weight="bold">aSc</text></svg><div style="position:absolute;left:90px;top:177px;width:908px;height:596px;background:#eaeaea;border:1px solid #d8d8d8;box-sizing:border-box;"></div><div style="position:absolute;left:90px;top:183px;white-space:nowrap;width:908px;text-align:center;font-size:16.3px;color:#333;">Περίοδοι</div><div style="position:absolute;left:959px;top:177px;width:33px;height:21px;background:#bdbdbd;"><svg style="position:absolute;left:11px;top:6px" width="11" height="9" viewBox="0 0 11 9"><path d="M1.2 1 L9.8 8 M9.8 1 L1.2 8" stroke="#fff" stroke-width="2.3"/></svg></div><div style="position:absolute;left:97px;top:207px;width:895px;height:558px;background:#f0f0f0;border:1px solid #dadada;box-sizing:border-box;"></div><div style="position:absolute;left:109px;top:218px;width:657px;height:325px;background:#fff;border:1px solid #828790;border-right:none;border-bottom:none;box-sizing:border-box;"></div><div style="position:absolute;left:110px;top:219px;width:656px;height:24px;background:#f0f0f0;border-bottom:1px solid #6f6f6f;box-sizing:border-box;"></div><div style="position:absolute;left:129px;top:222px;width:1px;height:17px;background:#7a7aa8;"></div><div style="position:absolute;left:319px;top:222px;width:1px;height:17px;background:#7a7aa8;"></div><div style="position:absolute;left:399px;top:222px;width:1px;height:17px;background:#7a7aa8;"></div><div style="position:absolute;left:479px;top:222px;width:1px;height:17px;background:#7a7aa8;"></div><div style="position:absolute;left:559px;top:222px;width:1px;height:17px;background:#7a7aa8;"></div><div style="position:absolute;left:599px;top:222px;width:1px;height:17px;background:#7a7aa8;"></div><div style="position:absolute;left:669px;top:222px;width:1px;height:17px;background:#7a7aa8;"></div><div style="position:absolute;left:749px;top:222px;width:1px;height:17px;background:#7a7aa8;"></div><div style="position:absolute;left:133px;top:225px;white-space:nowrap;font-size:12.3px;color:#111;">Όνομα</div><div style="position:absolute;left:322px;top:225px;white-space:nowrap;font-size:12.3px;color:#111;">Συντομογρ...</div><div style="position:absolute;left:402px;top:225px;white-space:nowrap;font-size:12.3px;color:#111;">Έναρξη</div><div style="position:absolute;left:482px;top:225px;white-space:nowrap;font-size:12.3px;color:#111;">Τέλος</div><div style="position:absolute;left:563px;top:225px;white-space:nowrap;font-size:12.3px;color:#111;">Διάρ...</div><div style="position:absolute;left:602px;top:225px;white-space:nowrap;font-size:12.3px;color:#111;">Εκτύπωση</div><div style="position:absolute;left:673px;top:225px;white-space:nowrap;font-size:12.3px;color:#111;">Κουδούνι</div><div style="position:absolute;left:110px;top:242px;width:640px;height:20px;background:#ffffff;box-sizing:border-box;"></div><svg style="position:absolute;left:111px;top:243px" width="18" height="18" viewBox="0 0 18 18">
<circle cx="9" cy="9" r="7" fill="#fff" stroke="#3a6ee0" stroke-width="1.7"/>
<circle cx="9" cy="9" r="6" fill="none" stroke="#a8c4f4" stroke-width="0.6"/>
<g stroke="#b0b0b0" stroke-width="0.7"><line x1="13.60" y1="9.00" x2="14.60" y2="9.00"/><line x1="12.98" y1="11.30" x2="13.85" y2="11.80"/><line x1="11.30" y1="12.98" x2="11.80" y2="13.85"/><line x1="9.00" y1="13.60" x2="9.00" y2="14.60"/><line x1="6.70" y1="12.98" x2="6.20" y2="13.85"/><line x1="5.02" y1="11.30" x2="4.15" y2="11.80"/><line x1="4.40" y1="9.00" x2="3.40" y2="9.00"/><line x1="5.02" y1="6.70" x2="4.15" y2="6.20"/><line x1="6.70" y1="5.02" x2="6.20" y2="4.15"/><line x1="9.00" y1="4.40" x2="9.00" y2="3.40"/><line x1="11.30" y1="5.02" x2="11.80" y2="4.15"/><line x1="12.98" y1="6.70" x2="13.85" y2="6.20"/></g>
<line x1="9" y1="9" x2="4.6" y2="6.6" stroke="#505060" stroke-width="1"/>
<line x1="9" y1="9" x2="12.2" y2="8.2" stroke="#505060" stroke-width="1"/>
<line x1="9" y1="9" x2="5.6" y2="13.4" stroke="#ee5050" stroke-width="0.8"/>
<circle cx="9" cy="9" r="0.9" fill="#a05050"/>
</svg><div style="position:absolute;left:134px;top:246px;white-space:nowrap;font-size:12.3px;color:#111;">1</div><div style="position:absolute;left:324px;top:246px;white-space:nowrap;font-size:12.3px;color:#111;">1</div><div style="position:absolute;left:403px;top:246px;white-space:nowrap;font-size:12.3px;color:#111;">8:00</div><div style="position:absolute;left:483px;top:246px;white-space:nowrap;font-size:12.3px;color:#111;">8:45</div><div style="position:absolute;left:564px;top:246px;white-space:nowrap;font-size:12.3px;color:#111;">45</div><div style="position:absolute;left:604px;top:246px;white-space:nowrap;font-size:12.3px;color:#111;">Ναι</div><div style="position:absolute;left:673px;top:246px;white-space:nowrap;font-size:12.3px;color:#111;">Όλα τα τμή...</div><div style="position:absolute;left:110px;top:262px;width:640px;height:20px;background:#f3f3f3;border-top:1px solid #e8e6dc;border-bottom:1px solid #e8e6dc;box-sizing:border-box;"></div><svg style="position:absolute;left:111px;top:263px" width="18" height="18" viewBox="0 0 18 18">
<circle cx="9" cy="9" r="7" fill="#fff" stroke="#3a6ee0" stroke-width="1.7"/>
<circle cx="9" cy="9" r="6" fill="none" stroke="#a8c4f4" stroke-width="0.6"/>
<g stroke="#b0b0b0" stroke-width="0.7"><line x1="13.60" y1="9.00" x2="14.60" y2="9.00"/><line x1="12.98" y1="11.30" x2="13.85" y2="11.80"/><line x1="11.30" y1="12.98" x2="11.80" y2="13.85"/><line x1="9.00" y1="13.60" x2="9.00" y2="14.60"/><line x1="6.70" y1="12.98" x2="6.20" y2="13.85"/><line x1="5.02" y1="11.30" x2="4.15" y2="11.80"/><line x1="4.40" y1="9.00" x2="3.40" y2="9.00"/><line x1="5.02" y1="6.70" x2="4.15" y2="6.20"/><line x1="6.70" y1="5.02" x2="6.20" y2="4.15"/><line x1="9.00" y1="4.40" x2="9.00" y2="3.40"/><line x1="11.30" y1="5.02" x2="11.80" y2="4.15"/><line x1="12.98" y1="6.70" x2="13.85" y2="6.20"/></g>
<line x1="9" y1="9" x2="4.6" y2="6.6" stroke="#505060" stroke-width="1"/>
<line x1="9" y1="9" x2="12.2" y2="8.2" stroke="#505060" stroke-width="1"/>
<line x1="9" y1="9" x2="5.6" y2="13.4" stroke="#ee5050" stroke-width="0.8"/>
<circle cx="9" cy="9" r="0.9" fill="#a05050"/>
</svg><div style="position:absolute;left:134px;top:266px;white-space:nowrap;font-size:12.3px;color:#111;">2</div><div style="position:absolute;left:324px;top:266px;white-space:nowrap;font-size:12.3px;color:#111;">2</div><div style="position:absolute;left:403px;top:266px;white-space:nowrap;font-size:12.3px;color:#111;">9:00</div><div style="position:absolute;left:483px;top:266px;white-space:nowrap;font-size:12.3px;color:#111;">9:45</div><div style="position:absolute;left:564px;top:266px;white-space:nowrap;font-size:12.3px;color:#111;">45</div><div style="position:absolute;left:604px;top:266px;white-space:nowrap;font-size:12.3px;color:#111;">Ναι</div><div style="position:absolute;left:673px;top:266px;white-space:nowrap;font-size:12.3px;color:#111;">Όλα τα τμή...</div><div style="position:absolute;left:110px;top:282px;width:640px;height:20px;background:#ffffff;box-sizing:border-box;"></div><svg style="position:absolute;left:111px;top:283px" width="18" height="18" viewBox="0 0 18 18">
<circle cx="9" cy="9" r="7" fill="#fff" stroke="#3a6ee0" stroke-width="1.7"/>
<circle cx="9" cy="9" r="6" fill="none" stroke="#a8c4f4" stroke-width="0.6"/>
<g stroke="#b0b0b0" stroke-width="0.7"><line x1="13.60" y1="9.00" x2="14.60" y2="9.00"/><line x1="12.98" y1="11.30" x2="13.85" y2="11.80"/><line x1="11.30" y1="12.98" x2="11.80" y2="13.85"/><line x1="9.00" y1="13.60" x2="9.00" y2="14.60"/><line x1="6.70" y1="12.98" x2="6.20" y2="13.85"/><line x1="5.02" y1="11.30" x2="4.15" y2="11.80"/><line x1="4.40" y1="9.00" x2="3.40" y2="9.00"/><line x1="5.02" y1="6.70" x2="4.15" y2="6.20"/><line x1="6.70" y1="5.02" x2="6.20" y2="4.15"/><line x1="9.00" y1="4.40" x2="9.00" y2="3.40"/><line x1="11.30" y1="5.02" x2="11.80" y2="4.15"/><line x1="12.98" y1="6.70" x2="13.85" y2="6.20"/></g>
<line x1="9" y1="9" x2="4.6" y2="6.6" stroke="#505060" stroke-width="1"/>
<line x1="9" y1="9" x2="12.2" y2="8.2" stroke="#505060" stroke-width="1"/>
<line x1="9" y1="9" x2="5.6" y2="13.4" stroke="#ee5050" stroke-width="0.8"/>
<circle cx="9" cy="9" r="0.9" fill="#a05050"/>
</svg><div style="position:absolute;left:134px;top:286px;white-space:nowrap;font-size:12.3px;color:#111;">3</div><div style="position:absolute;left:324px;top:286px;white-space:nowrap;font-size:12.3px;color:#111;">3</div><div style="position:absolute;left:403px;top:286px;white-space:nowrap;font-size:12.3px;color:#111;">10:00</div><div style="position:absolute;left:483px;top:286px;white-space:nowrap;font-size:12.3px;color:#111;">10:45</div><div style="position:absolute;left:564px;top:286px;white-space:nowrap;font-size:12.3px;color:#111;">45</div><div style="position:absolute;left:604px;top:286px;white-space:nowrap;font-size:12.3px;color:#111;">Ναι</div><div style="position:absolute;left:673px;top:286px;white-space:nowrap;font-size:12.3px;color:#111;">Όλα τα τμή...</div><div style="position:absolute;left:110px;top:302px;width:640px;height:20px;background:#ededed;border-top:1px solid #e8e6dc;border-bottom:1px solid #e8e6dc;box-sizing:border-box;"></div><svg style="position:absolute;left:111px;top:303px" width="18" height="18" viewBox="0 0 18 18">
<circle cx="9" cy="9" r="7" fill="#fff" stroke="#3a6ee0" stroke-width="1.7"/>
<circle cx="9" cy="9" r="6" fill="none" stroke="#a8c4f4" stroke-width="0.6"/>
<g stroke="#b0b0b0" stroke-width="0.7"><line x1="13.60" y1="9.00" x2="14.60" y2="9.00"/><line x1="12.98" y1="11.30" x2="13.85" y2="11.80"/><line x1="11.30" y1="12.98" x2="11.80" y2="13.85"/><line x1="9.00" y1="13.60" x2="9.00" y2="14.60"/><line x1="6.70" y1="12.98" x2="6.20" y2="13.85"/><line x1="5.02" y1="11.30" x2="4.15" y2="11.80"/><line x1="4.40" y1="9.00" x2="3.40" y2="9.00"/><line x1="5.02" y1="6.70" x2="4.15" y2="6.20"/><line x1="6.70" y1="5.02" x2="6.20" y2="4.15"/><line x1="9.00" y1="4.40" x2="9.00" y2="3.40"/><line x1="11.30" y1="5.02" x2="11.80" y2="4.15"/><line x1="12.98" y1="6.70" x2="13.85" y2="6.20"/></g>
<line x1="9" y1="9" x2="4.6" y2="6.6" stroke="#505060" stroke-width="1"/>
<line x1="9" y1="9" x2="12.2" y2="8.2" stroke="#505060" stroke-width="1"/>
<line x1="9" y1="9" x2="5.6" y2="13.4" stroke="#ee5050" stroke-width="0.8"/>
<circle cx="9" cy="9" r="0.9" fill="#a05050"/>
</svg><div style="position:absolute;left:134px;top:306px;white-space:nowrap;font-size:12.3px;color:#111;">4</div><div style="position:absolute;left:324px;top:306px;white-space:nowrap;font-size:12.3px;color:#111;">4</div><div style="position:absolute;left:403px;top:306px;white-space:nowrap;font-size:12.3px;color:#111;">11:00</div><div style="position:absolute;left:483px;top:306px;white-space:nowrap;font-size:12.3px;color:#111;">11:45</div><div style="position:absolute;left:564px;top:306px;white-space:nowrap;font-size:12.3px;color:#111;">45</div><div style="position:absolute;left:604px;top:306px;white-space:nowrap;font-size:12.3px;color:#111;">Ναι</div><div style="position:absolute;left:673px;top:306px;white-space:nowrap;font-size:12.3px;color:#111;">Όλα τα τμή...</div><div style="position:absolute;left:110px;top:322px;width:640px;height:20px;background:#ffffff;box-sizing:border-box;"></div><svg style="position:absolute;left:111px;top:323px" width="18" height="18" viewBox="0 0 18 18">
<circle cx="9" cy="9" r="7" fill="#fff" stroke="#3a6ee0" stroke-width="1.7"/>
<circle cx="9" cy="9" r="6" fill="none" stroke="#a8c4f4" stroke-width="0.6"/>
<g stroke="#b0b0b0" stroke-width="0.7"><line x1="13.60" y1="9.00" x2="14.60" y2="9.00"/><line x1="12.98" y1="11.30" x2="13.85" y2="11.80"/><line x1="11.30" y1="12.98" x2="11.80" y2="13.85"/><line x1="9.00" y1="13.60" x2="9.00" y2="14.60"/><line x1="6.70" y1="12.98" x2="6.20" y2="13.85"/><line x1="5.02" y1="11.30" x2="4.15" y2="11.80"/><line x1="4.40" y1="9.00" x2="3.40" y2="9.00"/><line x1="5.02" y1="6.70" x2="4.15" y2="6.20"/><line x1="6.70" y1="5.02" x2="6.20" y2="4.15"/><line x1="9.00" y1="4.40" x2="9.00" y2="3.40"/><line x1="11.30" y1="5.02" x2="11.80" y2="4.15"/><line x1="12.98" y1="6.70" x2="13.85" y2="6.20"/></g>
<line x1="9" y1="9" x2="4.6" y2="6.6" stroke="#505060" stroke-width="1"/>
<line x1="9" y1="9" x2="12.2" y2="8.2" stroke="#505060" stroke-width="1"/>
<line x1="9" y1="9" x2="5.6" y2="13.4" stroke="#ee5050" stroke-width="0.8"/>
<circle cx="9" cy="9" r="0.9" fill="#a05050"/>
</svg><div style="position:absolute;left:134px;top:326px;white-space:nowrap;font-size:12.3px;color:#111;">5</div><div style="position:absolute;left:324px;top:326px;white-space:nowrap;font-size:12.3px;color:#111;">5</div><div style="position:absolute;left:403px;top:326px;white-space:nowrap;font-size:12.3px;color:#111;">12:00</div><div style="position:absolute;left:483px;top:326px;white-space:nowrap;font-size:12.3px;color:#111;">12:45</div><div style="position:absolute;left:564px;top:326px;white-space:nowrap;font-size:12.3px;color:#111;">45</div><div style="position:absolute;left:604px;top:326px;white-space:nowrap;font-size:12.3px;color:#111;">Ναι</div><div style="position:absolute;left:673px;top:326px;white-space:nowrap;font-size:12.3px;color:#111;">Όλα τα τμή...</div><div style="position:absolute;left:110px;top:342px;width:640px;height:20px;background:#f3f3f3;border-top:1px solid #e8e6dc;border-bottom:1px solid #e8e6dc;box-sizing:border-box;"></div><svg style="position:absolute;left:111px;top:343px" width="18" height="18" viewBox="0 0 18 18">
<circle cx="9" cy="9" r="7" fill="#fff" stroke="#3a6ee0" stroke-width="1.7"/>
<circle cx="9" cy="9" r="6" fill="none" stroke="#a8c4f4" stroke-width="0.6"/>
<g stroke="#b0b0b0" stroke-width="0.7"><line x1="13.60" y1="9.00" x2="14.60" y2="9.00"/><line x1="12.98" y1="11.30" x2="13.85" y2="11.80"/><line x1="11.30" y1="12.98" x2="11.80" y2="13.85"/><line x1="9.00" y1="13.60" x2="9.00" y2="14.60"/><line x1="6.70" y1="12.98" x2="6.20" y2="13.85"/><line x1="5.02" y1="11.30" x2="4.15" y2="11.80"/><line x1="4.40" y1="9.00" x2="3.40" y2="9.00"/><line x1="5.02" y1="6.70" x2="4.15" y2="6.20"/><line x1="6.70" y1="5.02" x2="6.20" y2="4.15"/><line x1="9.00" y1="4.40" x2="9.00" y2="3.40"/><line x1="11.30" y1="5.02" x2="11.80" y2="4.15"/><line x1="12.98" y1="6.70" x2="13.85" y2="6.20"/></g>
<line x1="9" y1="9" x2="4.6" y2="6.6" stroke="#505060" stroke-width="1"/>
<line x1="9" y1="9" x2="12.2" y2="8.2" stroke="#505060" stroke-width="1"/>
<line x1="9" y1="9" x2="5.6" y2="13.4" stroke="#ee5050" stroke-width="0.8"/>
<circle cx="9" cy="9" r="0.9" fill="#a05050"/>
</svg><div style="position:absolute;left:134px;top:346px;white-space:nowrap;font-size:12.3px;color:#111;">6</div><div style="position:absolute;left:324px;top:346px;white-space:nowrap;font-size:12.3px;color:#111;">6</div><div style="position:absolute;left:403px;top:346px;white-space:nowrap;font-size:12.3px;color:#111;">13:00</div><div style="position:absolute;left:483px;top:346px;white-space:nowrap;font-size:12.3px;color:#111;">13:45</div><div style="position:absolute;left:564px;top:346px;white-space:nowrap;font-size:12.3px;color:#111;">45</div><div style="position:absolute;left:604px;top:346px;white-space:nowrap;font-size:12.3px;color:#111;">Ναι</div><div style="position:absolute;left:673px;top:346px;white-space:nowrap;font-size:12.3px;color:#111;">Όλα τα τμή...</div><div style="position:absolute;left:110px;top:362px;width:640px;height:20px;background:#ffffff;box-sizing:border-box;"></div><svg style="position:absolute;left:111px;top:363px" width="18" height="18" viewBox="0 0 18 18">
<circle cx="9" cy="9" r="7" fill="#fff" stroke="#3a6ee0" stroke-width="1.7"/>
<circle cx="9" cy="9" r="6" fill="none" stroke="#a8c4f4" stroke-width="0.6"/>
<g stroke="#b0b0b0" stroke-width="0.7"><line x1="13.60" y1="9.00" x2="14.60" y2="9.00"/><line x1="12.98" y1="11.30" x2="13.85" y2="11.80"/><line x1="11.30" y1="12.98" x2="11.80" y2="13.85"/><line x1="9.00" y1="13.60" x2="9.00" y2="14.60"/><line x1="6.70" y1="12.98" x2="6.20" y2="13.85"/><line x1="5.02" y1="11.30" x2="4.15" y2="11.80"/><line x1="4.40" y1="9.00" x2="3.40" y2="9.00"/><line x1="5.02" y1="6.70" x2="4.15" y2="6.20"/><line x1="6.70" y1="5.02" x2="6.20" y2="4.15"/><line x1="9.00" y1="4.40" x2="9.00" y2="3.40"/><line x1="11.30" y1="5.02" x2="11.80" y2="4.15"/><line x1="12.98" y1="6.70" x2="13.85" y2="6.20"/></g>
<line x1="9" y1="9" x2="4.6" y2="6.6" stroke="#505060" stroke-width="1"/>
<line x1="9" y1="9" x2="12.2" y2="8.2" stroke="#505060" stroke-width="1"/>
<line x1="9" y1="9" x2="5.6" y2="13.4" stroke="#ee5050" stroke-width="0.8"/>
<circle cx="9" cy="9" r="0.9" fill="#a05050"/>
</svg><div style="position:absolute;left:134px;top:366px;white-space:nowrap;font-size:12.3px;color:#111;">7</div><div style="position:absolute;left:324px;top:366px;white-space:nowrap;font-size:12.3px;color:#111;">7</div><div style="position:absolute;left:403px;top:366px;white-space:nowrap;font-size:12.3px;color:#111;">14:00</div><div style="position:absolute;left:483px;top:366px;white-space:nowrap;font-size:12.3px;color:#111;">14:45</div><div style="position:absolute;left:564px;top:366px;white-space:nowrap;font-size:12.3px;color:#111;">45</div><div style="position:absolute;left:604px;top:366px;white-space:nowrap;font-size:12.3px;color:#111;">Ναι</div><div style="position:absolute;left:673px;top:366px;white-space:nowrap;font-size:12.3px;color:#111;">Όλα τα τμή...</div><div style="position:absolute;left:795px;top:224px;width:184px;height:26px;background:linear-gradient(#f2f2f2,#e4e4e4);border:1px solid #adadad;box-sizing:border-box;"><div style="position:absolute;left:0;right:0;top:0;line-height:24px;text-align:center;font-size:10.5px;color:#000;">Επεξεργασία</div></div><div style="position:absolute;left:795px;top:266px;width:184px;height:26px;background:linear-gradient(#f2f2f2,#e4e4e4);border:1px solid #adadad;box-sizing:border-box;"><div style="position:absolute;left:0;right:0;top:0;line-height:24px;text-align:center;font-size:10.5px;color:#000;">Διαγραφή</div></div><div style="position:absolute;left:109px;top:572px;width:459px;height:81px;border:1px solid #dcdcdc;box-sizing:border-box;"></div><div style="position:absolute;left:118px;top:564px;width:369px;height:14px;background:#f0f0f0;"></div><div style="position:absolute;left:119px;top:567px;width:13px;height:13px;background:#fff;border:1px solid #333;box-sizing:border-box;"></div><div style="position:absolute;left:134px;top:566px;white-space:nowrap;font-size:10.8px;color:#000;line-height:14px;">Διαφορετικές ώρες διδασκαλίας για διαφορετικά τμημάτα</div><div style="position:absolute;left:109px;top:665px;width:459px;height:81px;border:1px solid #dcdcdc;box-sizing:border-box;"></div><div style="position:absolute;left:118px;top:657px;width:399px;height:14px;background:#f0f0f0;"></div><div style="position:absolute;left:119px;top:660px;width:13px;height:13px;background:#fff;border:1px solid #333;box-sizing:border-box;"></div><div style="position:absolute;left:134px;top:659px;white-space:nowrap;font-size:10.8px;color:#000;line-height:14px;">Άλλη Έναρξη σε ημέρες</div><div style="position:absolute;left:641px;top:328px;width:490px;height:563px;background:#f9f9f9;border:1px solid #cfcfcf;box-sizing:border-box;"></div><div style="position:absolute;left:853px;top:336px;white-space:nowrap;font-size:16px;color:#333;">Περίοδος</div><div style="position:absolute;left:1091px;top:329px;width:33px;height:21px;background:#c75050;"><svg style="position:absolute;left:11px;top:6px" width="11" height="9" viewBox="0 0 11 9"><path d="M1.2 1 L9.8 8 M9.8 1 L1.2 8" stroke="#fff" stroke-width="2.3"/></svg></div><div style="position:absolute;left:648px;top:359px;width:476px;height:525px;background:#f0f0f0;border:1px solid #dadada;box-sizing:border-box;"></div><div style="position:absolute;left:671px;top:387px;white-space:nowrap;font-size:11px;color:#000;">Ονομασία περιόδου:</div><div style="position:absolute;left:671px;top:415px;white-space:nowrap;font-size:11px;color:#000;">Συντομογραφία</div><div style="position:absolute;left:846px;top:383px;width:183px;height:20px;background:#fff;border:1px solid #569de5;box-sizing:border-box;"><div style="position:absolute;left:4px;top:2px;font-size:11px;">4</div></div><div style="position:absolute;left:846px;top:409px;width:183px;height:20px;background:#fff;border:1px solid #abadb3;box-sizing:border-box;"><div style="position:absolute;left:4px;top:2px;font-size:11px;">4</div></div><div style="position:absolute;left:661px;top:483px;width:452px;height:94px;border:1px solid #dcdcdc;box-sizing:border-box;"></div><div style="position:absolute;left:667px;top:476px;width:80px;height:14px;background:#f0f0f0;"></div><div style="position:absolute;left:669px;top:478px;white-space:nowrap;font-size:11px;color:#000;">Εναρξη / Τέλος</div><div style="position:absolute;left:684px;top:505px;width:81px;height:21px;background:#fff;border:1px solid #acacac;box-sizing:border-box;"><div style="position:absolute;left:5px;top:0;line-height:19px;font-size:11px;color:#000;">11</div><svg style="position:absolute;right:3px;top:7px" width="9" height="6" viewBox="0 0 9 6"><path d="M1 1 L4.5 4.8 L8 1" fill="none" stroke="#333" stroke-width="1.6"/></svg></div><div style="position:absolute;left:771px;top:505px;width:81px;height:21px;background:#fff;border:1px solid #acacac;box-sizing:border-box;"><div style="position:absolute;left:5px;top:0;line-height:19px;font-size:11px;color:#000;">05</div><svg style="position:absolute;right:3px;top:7px" width="9" height="6" viewBox="0 0 9 6"><path d="M1 1 L4.5 4.8 L8 1" fill="none" stroke="#333" stroke-width="1.6"/></svg></div><div style="position:absolute;left:895px;top:505px;width:81px;height:21px;background:#fff;border:1px solid #acacac;box-sizing:border-box;"><div style="position:absolute;left:5px;top:0;line-height:19px;font-size:11px;color:#000;">11</div><svg style="position:absolute;right:3px;top:7px" width="9" height="6" viewBox="0 0 9 6"><path d="M1 1 L4.5 4.8 L8 1" fill="none" stroke="#333" stroke-width="1.6"/></svg></div><div style="position:absolute;left:982px;top:505px;width:81px;height:21px;background:#fff;border:1px solid #acacac;box-sizing:border-box;"><div style="position:absolute;left:5px;top:0;line-height:19px;font-size:11px;color:#000;">45</div><svg style="position:absolute;right:3px;top:7px" width="9" height="6" viewBox="0 0 9 6"><path d="M1 1 L4.5 4.8 L8 1" fill="none" stroke="#333" stroke-width="1.6"/></svg></div><div style="position:absolute;left:661px;top:668px;width:452px;height:105px;border:1px solid #dcdcdc;box-sizing:border-box;"></div><div style="position:absolute;left:667px;top:662px;width:60px;height:14px;background:#f0f0f0;"></div><div style="position:absolute;left:669px;top:663px;white-space:nowrap;font-size:10.5px;color:#000;">Εκτυπώσεις</div><div style="position:absolute;left:675px;top:690px;width:13px;height:13px;background:#fff;border:1px solid #333;box-sizing:border-box;"><svg style="position:absolute;left:0;top:0" width="11" height="11" viewBox="0 0 11 11"><path d="M2 5.5 L4.5 8.5 L9.5 2" fill="none" stroke="#111" stroke-width="1.8"/></svg></div><div style="position:absolute;left:690px;top:688px;width:242px;height:17px;overflow:hidden;"><div style="position:absolute;left:0;top:2px;white-space:nowrap;font-size:10.8px;color:#000;">Εκτύπωση περιόδ./διαλείμ. στο συνολ. ωρολόγιο</div></div><div style="position:absolute;left:675px;top:710px;width:13px;height:13px;background:#fff;border:1px solid #333;box-sizing:border-box;"><svg style="position:absolute;left:0;top:0" width="11" height="11" viewBox="0 0 11 11"><path d="M2 5.5 L4.5 8.5 L9.5 2" fill="none" stroke="#111" stroke-width="1.8"/></svg></div><div style="position:absolute;left:690px;top:708px;width:242px;height:17px;overflow:hidden;"><div style="position:absolute;left:0;top:2px;white-space:nowrap;font-size:10.8px;color:#000;">Εκτύπωση περιόδ./διαλείμ. στο ωρολόγιο εκπαιδευτικών</div></div><div style="position:absolute;left:675px;top:731px;width:13px;height:13px;background:#fff;border:1px solid #333;box-sizing:border-box;"><svg style="position:absolute;left:0;top:0" width="11" height="11" viewBox="0 0 11 11"><path d="M2 5.5 L4.5 8.5 L9.5 2" fill="none" stroke="#111" stroke-width="1.8"/></svg></div><div style="position:absolute;left:690px;top:729px;width:242px;height:17px;overflow:hidden;"><div style="position:absolute;left:0;top:2px;white-space:nowrap;font-size:10.8px;color:#000;">Εκτύπωση περιόδ./διαλείμ. στο ωρολόγιο τμημάτων</div></div><div style="position:absolute;left:675px;top:750px;width:13px;height:13px;background:#fff;border:1px solid #333;box-sizing:border-box;"><svg style="position:absolute;left:0;top:0" width="11" height="11" viewBox="0 0 11 11"><path d="M2 5.5 L4.5 8.5 L9.5 2" fill="none" stroke="#111" stroke-width="1.8"/></svg></div><div style="position:absolute;left:690px;top:748px;width:242px;height:17px;overflow:hidden;"><div style="position:absolute;left:0;top:2px;white-space:nowrap;font-size:10.8px;color:#000;">Εκτύπωση της περιόδου στο ωρ. προγρ. των αιθουσών</div></div><div style="position:absolute;left:677px;top:784px;width:100px;height:20px;overflow:hidden;"><div style="position:absolute;left:0;top:1px;font-size:11px;line-height:13px;color:#000;">Εκτύπωση<br>διαλειμμάτων:</div></div><div style="position:absolute;left:790px;top:779px;width:138px;height:21px;background:#fff;border:1px solid #acacac;box-sizing:border-box;"><div style="position:absolute;left:5px;top:0;line-height:19px;font-size:11px;color:#000;">Όλα τα τμήματα</div><svg style="position:absolute;right:3px;top:7px" width="9" height="6" viewBox="0 0 9 6"><path d="M1 1 L4.5 4.8 L8 1" fill="none" stroke="#333" stroke-width="1.6"/></svg></div><div style="position:absolute;left:958px;top:850px;width:73px;height:21px;background:linear-gradient(#f0f0f0,#e5e5e5);border:1px solid #3c8ee6;box-sizing:border-box;"><div style="position:absolute;left:0;right:0;top:0;line-height:21px;text-align:center;font-size:11px;">OK</div></div><div style="position:absolute;left:1039px;top:850px;width:73px;height:21px;background:linear-gradient(#f0f0f0,#e5e5e5);border:1px solid #adadad;box-sizing:border-box;"><div style="position:absolute;left:0;right:0;top:0;line-height:21px;text-align:center;font-size:11px;">Ακύρωση</div></div><div style="position:absolute;left:106px;top:299px;width:646px;height:26px;border:3px solid #e04545;box-sizing:border-box;"></div><div style="position:absolute;left:790px;top:219px;width:194px;height:36px;border:3px solid #e04545;box-sizing:border-box;"></div><div style="position:absolute;left:679px;top:500px;width:389px;height:31px;border:3px solid #e04545;box-sizing:border-box;"></div><div style="position:absolute;left:65px;top:256px;width:40px;height:40px;background:#e34b4b;border-radius:50%;box-shadow:0.5px 1px 1.5px rgba(0,60,60,0.35);"><div style="position:absolute;left:0;right:0;top:-1px;line-height:40px;text-align:center;color:#fff;font-size:32px;transform:scaleX(0.92);">3</div></div><div style="position:absolute;left:750px;top:181px;width:40px;height:40px;background:#e34b4b;border-radius:50%;box-shadow:0.5px 1px 1.5px rgba(0,60,60,0.35);"><div style="position:absolute;left:0;right:0;top:-1px;line-height:40px;text-align:center;color:#fff;font-size:32px;transform:scaleX(0.92);">4</div></div><div style="position:absolute;left:847px;top:448px;width:40px;height:40px;background:#e34b4b;border-radius:50%;box-shadow:0.5px 1px 1.5px rgba(0,60,60,0.35);"><div style="position:absolute;left:0;right:0;top:-1px;line-height:40px;text-align:center;color:#fff;font-size:32px;transform:scaleX(0.92);">5</div></div><svg style="position:absolute;left:0;top:0" width="1144" height="903" viewBox="0 0 1144 903"><path d="M985 261 C985 310 1057 330 1057 380" fill="none" stroke="#e04848" stroke-width="4.6" stroke-linecap="round"/><path d="M1050.5 377 L1065 377.5 L1058.3 391.5 Z" fill="#e04848" stroke="#e04848" stroke-width="0.8" stroke-linejoin="round"/></svg>
</body></html>
